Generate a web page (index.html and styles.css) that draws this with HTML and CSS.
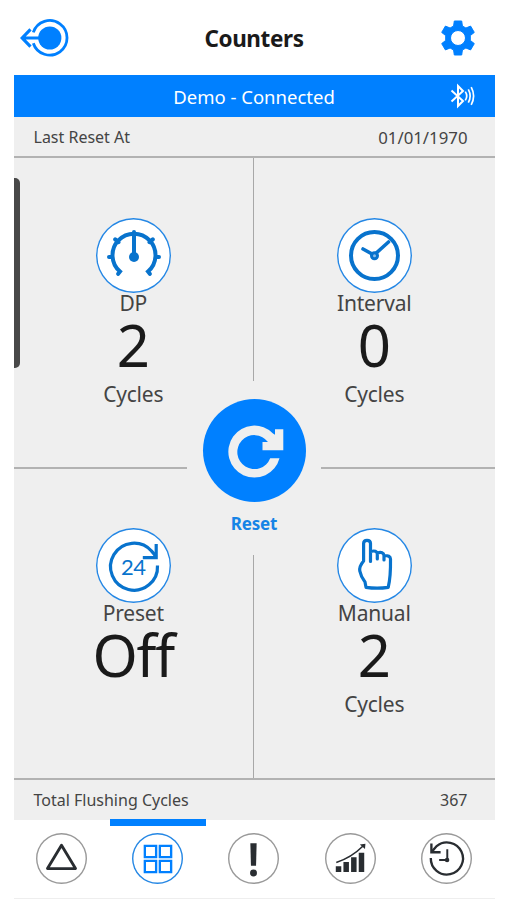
FILE: index.html
```
<!DOCTYPE html>
<html lang="en">
<head>
    <meta charset="UTF-8">
    <meta name="viewport" content="width=device-width, initial-scale=1.0">
    <title>Counters</title>
    <link rel="stylesheet" href="styles.css">
</head>
<body>
    <div class="app">
        <header class="header">
            <svg class="back" width="50" height="38" viewBox="0 0 50 38" fill="none" stroke="#0080ff">
                <path d="M13.3 13.4A17.3 17.3 0 1 1 13.3 24.2" stroke-width="2.8"/>
                <circle cx="29.8" cy="19" r="11.6" fill="#0080ff" stroke="none"/>
                <path d="M2.6 19H20M10.5 10.4L2.2 19L10.5 27.6" stroke-width="3.2"/>
            </svg>
            <h1>Counters</h1>
            <svg class="gear" width="34" height="36" viewBox="0 0 34 36" fill="#0080ff" stroke="#0080ff" stroke-linejoin="round">
                <path fill-rule="evenodd" stroke-width="1" d="M13.3 1H20.7L21.4 6L24.9 8L29.6 6.1L33.3 12.4L29.3 15.6V20.4L33.3 23.6L29.6 29.9L24.9 28L21.4 30L20.7 35H13.3L12.6 30L9.1 28L4.4 29.9L.7 23.6L4.7 20.4V15.6L.7 12.4L4.4 6.1L9.1 8L12.6 6ZM17 10.5A7.5 7.5 0 1 0 17 25.5A7.5 7.5 0 1 0 17 10.5Z"/>
            </svg>
        </header>

        <div class="status">
            <span>Demo - Connected</span>
            <svg class="bluetooth" width="26" height="26" viewBox="0 0 26 26" fill="none" stroke="#fff" stroke-width="2">
                <path d="M1.5 7.5L13 18L8 23V3L13 8L1.5 18.5"/>
                <path d="M15.3 8.6Q18.2 13 15.3 17.4M18.3 6.4Q22 13 18.3 19.6M21.2 4.2Q26 13 21.2 21.8" stroke-width="1.7"/>
            </svg>
        </div>

        <div class="info-row">
            <span>Last Reset At</span>
            <span class="date">01/01/1970</span>
        </div>

        <main class="counters">
            <div class="drawer-handle"></div>
            <section class="counter">
                <svg class="counter-icon" viewBox="0 0 75 75" fill="none" stroke="#0873cd" stroke-width="4" stroke-linecap="round">
                    <path d="M22.2 55.8L24 53.5A21.5 21.5 0 1 1 52 53.5L53.8 55.8"/>
                    <path d="M38 38.5V14M13 39H16M60 39H63M19.2 21.4L22.5 24.2M56.8 21.4L53.5 24.2"/>
                    <circle cx="38" cy="39" r="5" fill="#0873cd" stroke="none"/>
                </svg>
                <p class="label">DP</p>
                <p class="value">2</p>
                <p class="unit">Cycles</p>
            </section>
            <section class="counter">
                <svg class="counter-icon" viewBox="0 0 75 75" fill="none" stroke="#0873cd" stroke-width="4" stroke-linecap="round">
                    <circle cx="37.5" cy="37.5" r="23.5"/>
                    <path d="M26 31L37 37L51.5 24" stroke-width="3.6"/>
                    <circle cx="37.5" cy="37.8" r="3" fill="#8abde8" stroke-width="3"/>
                </svg>
                <p class="label">Interval</p>
                <p class="value">0</p>
                <p class="unit">Cycles</p>
            </section>
            <section class="counter">
                <svg class="counter-icon" viewBox="0 0 75 75" fill="none" stroke="#0873cd" stroke-width="3.2">
                    <path d="M61.5 37.5A23.5 23.5 0 1 1 55.5 23Q58 25.5 60 29"/>
                    <path d="M60.2 16V29.6H46.8"/>
                    <text class="hours" x="25" y="47">24</text>
                </svg>
                <p class="label">Preset</p>
                <p class="value off">Off</p>
            </section>
            <section class="counter">
                <svg class="counter-icon" viewBox="0 0 75 75" fill="none" stroke="#0873cd" stroke-width="3.2" stroke-linecap="round" stroke-linejoin="round">
                    <path d="M33.5 33.5V15.5Q33.5 12.3 30 12.3Q26.6 12.3 26.6 15.5V33Q22 38.5 22.8 43Q24 49 28 54L29 59.3Q40 61 51.2 59.3Q53.8 49 53.5 31Q53.4 27.3 47 27.5M33.5 23.5Q40 21.8 40.3 26V31M40.3 25Q46.5 23.2 47 27.5V32"/>
                </svg>
                <p class="label">Manual</p>
                <p class="value">2</p>
                <p class="unit">Cycles</p>
            </section>

            <div class="reset">
                <button type="button" aria-label="Reset">
                    <svg width="103" height="103" viewBox="0 0 103 103">
                        <path d="M76.5 59.2A26 26 0 1 1 70 34.5L72 35.8V30.2H80.3V51.3H59.5V43H65A17 17 0 1 0 67.2 59.2Z" fill="#efefef"/>
                    </svg>
                </button>
                <span>Reset</span>
            </div>
        </main>

        <div class="info-row total">
            <span>Total Flushing Cycles</span>
            <span>367</span>
        </div>

        <nav class="tabs">
            <a class="tab">
                <svg viewBox="0 0 52 52" fill="none" stroke="#292d31" stroke-width="2.9" stroke-linejoin="round"><path d="M26 12.5L40.3 36.3H11.7Z"/></svg>
            </a>
            <a class="tab active">
                <svg viewBox="0 0 52 52" fill="none" stroke="#0080ff" stroke-width="2.4"><path d="M13.1 13.1H24.6V24.6H13.1ZM28.4 13.1H39.9V24.6H28.4ZM13.1 28.4H24.6V39.9H13.1ZM28.4 28.4H39.9V39.9H28.4Z"/></svg>
            </a>
            <a class="tab">
                <svg viewBox="0 0 52 52" fill="#292d31"><path d="M22.8 10.5H29.2L28.6 33.5H23.4Z"/><circle cx="26" cy="40.8" r="3.5"/></svg>
            </a>
            <a class="tab">
                <svg viewBox="0 0 52 52" fill="#292d31">
                    <path d="M11 34H16.6V39.8H11ZM18.8 29.5H24.4V39.8H18.8ZM26.6 24.8H32.2V39.8H26.6ZM34.4 20.2H40V39.8H34.4Z"/>
                    <path d="M11.5 30Q27 25 38.5 13.5" fill="none" stroke="#292d31" stroke-width="1.6"/>
                    <path d="M35.5 11.8L41.2 11L40.8 16.4Z"/>
                </svg>
            </a>
            <a class="tab">
                <svg viewBox="0 0 52 52" fill="none" stroke="#292d31" stroke-width="2.4">
                    <path d="M10 25.5A16.4 16.4 0 1 0 16 13.3L11.5 18.5"/>
                    <path d="M10.6 10.8V19.6H20"/>
                    <path d="M26.8 16.5V27.5H18.5" stroke-width="2"/>
                    <circle cx="26.6" cy="27.5" r="2.3" fill="#292d31" stroke="none"/>
                </svg>
            </a>
        </nav>
    </div>
</body>
</html>
```
FILE: styles.css
```
* {
    margin: 0;
    padding: 0;
    box-sizing: border-box;
}

body {
    font-family: 'Noto Sans', sans-serif;
    color: #444;
    background: #fff;
    height: 900px;
    overflow: hidden;
}

.app {
    width: 481px;
    margin-left: 13.5px;
}

.header {
    height: 75px;
    padding: 1px 19.5px 0 6px;
    display: grid;
    grid-template-columns: 50px 1fr 36.5px;
    align-items: center;
}

.header h1 {
    color: #1a1a1a;
    font-size: 22.5px;
    line-height: 30px;
    letter-spacing: -0.4px;
    text-align: center;
    padding-top: 2px;
}

.gear {
    justify-self: end;
}

.status {
    height: 42px;
    padding: 0 19px 0 65px;
    display: grid;
    grid-template-columns: 1fr 46px;
    align-items: center;
    justify-items: center;
    color: #fff;
    background: #0080ff;
    font-size: 18.5px;
    line-height: 26px;
}

.status span {
    padding-top: 1px;
}

.bluetooth {
    justify-self: end;
}

.info-row {
    height: 41px;
    padding: 1px 27px 0 20px;
    display: flex;
    justify-content: space-between;
    align-items: center;
    background: #efefef;
    border-bottom: 2px solid #b2b2b2;
    font-size: 16px;
}

.date {
    font-size: 16.8px;
}

.counters {
    position: relative;
    height: 620px;
    display: grid;
    grid-template-columns: 1fr 1fr;
    grid-template-rows: 311px 309px;
    background: #efefef;
}

.counter {
    display: flex;
    flex-direction: column;
    align-items: center;
    padding-top: 59px;
}

.counter:nth-of-type(odd) {
    border-right: 1px solid #a8a8a8;
}

.counter:nth-of-type(-n+2) {
    padding-top: 60px;
    border-bottom: 2px solid #b2b2b2;
}

.counter-icon {
    width: 75px;
    height: 75px;
    flex: none;
    border-radius: 50%;
    background: #fff;
    box-shadow: inset 0 0 0 1.4px #2587e4;
}

.hours {
    fill: #0873cd;
    stroke: none;
    font-family: Lato, sans-serif;
    font-size: 22px;
    letter-spacing: -0.5px;
}

.label,
.unit {
    font-size: 21px;
    line-height: 22px;
    letter-spacing: -0.2px;
}

.label {
    margin-top: -1px;
}

.value {
    color: #1a1a1a;
    font-size: 58px;
    line-height: 62px;
}

.value.off {
    letter-spacing: -1.2px;
}

.unit {
    margin-top: 7px;
}

.drawer-handle {
    position: absolute;
    left: 0;
    top: 20px;
    width: 6px;
    height: 190px;
    background: #484848;
    border-radius: 0 5px 5px 0;
}

.reset {
    position: absolute;
    left: 50%;
    top: 223px;
    width: 134px;
    height: 174px;
    margin-left: -67px;
    padding-top: 18px;
    display: flex;
    flex-direction: column;
    align-items: center;
    background: #efefef;
    color: #1684e6;
    font-size: 17px;
    font-weight: bold;
    letter-spacing: -0.2px;
}

.reset button {
    width: 103px;
    height: 103px;
    flex: none;
    border: none;
    border-radius: 50%;
    background: #0080ff;
}

.reset span {
    margin-top: 10px;
    line-height: 23px;
}

.info-row.total {
    border-top: 2px solid #b2b2b2;
    border-bottom: none;
    height: 42px;
    padding-top: 0;
}

.tabs {
    display: grid;
    grid-template-columns: repeat(5, 1fr);
    height: 79px;
    border-bottom: 1px solid #eee;
}

.tab {
    position: relative;
    padding-top: 13px;
    text-align: center;
}

.tab svg {
    width: 51px;
    height: 51px;
    border-radius: 50%;
    box-shadow: inset 0 0 0 1.4px #999;
}

.tab.active svg {
    box-shadow: inset 0 0 0 1.4px #2587e4;
}

.tab.active::before {
    content: '';
    position: absolute;
    left: 0;
    top: -1px;
    width: 100%;
    height: 7px;
    background: #0080ff;
}
```
